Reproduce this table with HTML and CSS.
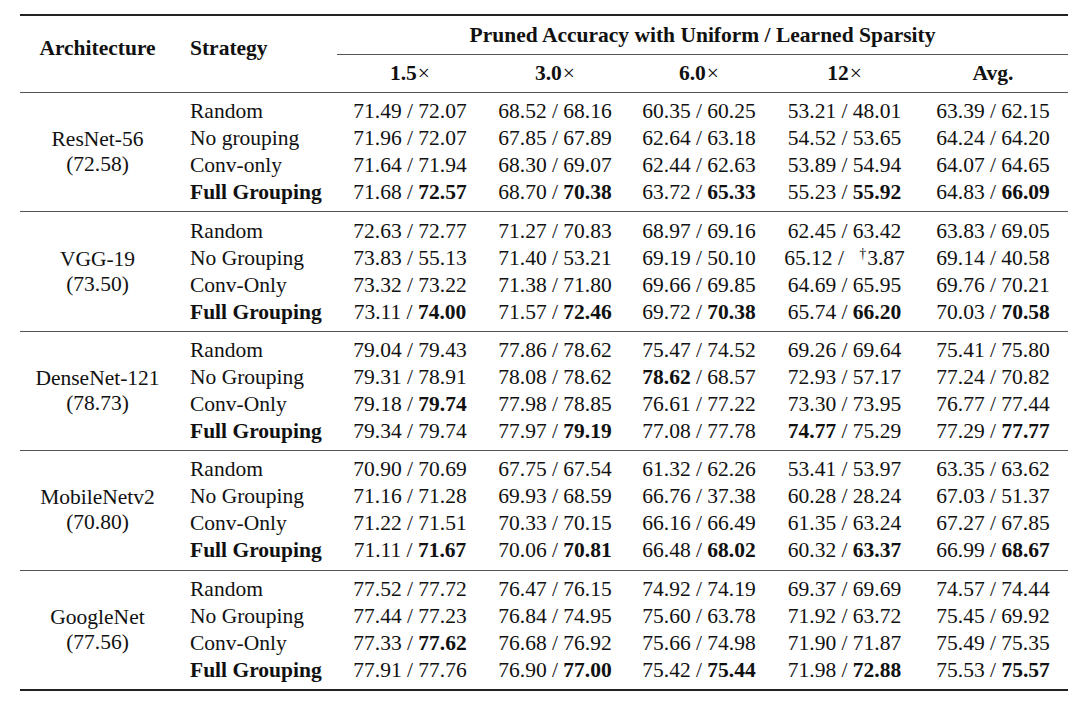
FILE: index.html
```html
<!DOCTYPE html>
<html lang="en">
<head>
<meta charset="utf-8">
<title>Pruned Accuracy with Uniform / Learned Sparsity</title>
<link rel="stylesheet" href="styles.css">
</head>
<body>
<table class="results">
  <colgroup>
    <col class="c-arch">
    <col class="c-strat">
    <col class="c-n1">
    <col class="c-n2">
    <col class="c-n3">
    <col class="c-n4">
    <col class="c-n5">
  </colgroup>
  <thead>
    <tr>
      <th class="h-arch" rowspan="2">Architecture</th>
      <th class="h-strat" rowspan="2">Strategy</th>
      <th class="h-group" colspan="5">Pruned Accuracy with Uniform / Learned Sparsity</th>
    </tr>
    <tr>
      <th class="h-sub">1.5<span class="times">×</span></th>
      <th class="h-sub">3.0<span class="times">×</span></th>
      <th class="h-sub">6.0<span class="times">×</span></th>
      <th class="h-sub">12<span class="times">×</span></th>
      <th class="h-sub">Avg.</th>
    </tr>
  </thead>
  <tbody>
    <tr class="first">
      <td class="arch" rowspan="4">ResNet-56<br>(72.58)</td>
      <td class="strat">Random</td>
      <td class="num">71.49 / 72.07</td>
      <td class="num">68.52 / 68.16</td>
      <td class="num">60.35 / 60.25</td>
      <td class="num">53.21 / 48.01</td>
      <td class="num">63.39 / 62.15</td>
    </tr>
    <tr>
      <td class="strat">No grouping</td>
      <td class="num">71.96 / 72.07</td>
      <td class="num">67.85 / 67.89</td>
      <td class="num">62.64 / 63.18</td>
      <td class="num">54.52 / 53.65</td>
      <td class="num">64.24 / 64.20</td>
    </tr>
    <tr>
      <td class="strat">Conv-only</td>
      <td class="num">71.64 / 71.94</td>
      <td class="num">68.30 / 69.07</td>
      <td class="num">62.44 / 62.63</td>
      <td class="num">53.89 / 54.94</td>
      <td class="num">64.07 / 64.65</td>
    </tr>
    <tr class="last">
      <td class="strat"><b>Full Grouping</b></td>
      <td class="num">71.68 / <b>72.57</b></td>
      <td class="num">68.70 / <b>70.38</b></td>
      <td class="num">63.72 / <b>65.33</b></td>
      <td class="num">55.23 / <b>55.92</b></td>
      <td class="num">64.83 / <b>66.09</b></td>
    </tr>
  </tbody>
  <tbody>
    <tr class="first">
      <td class="arch" rowspan="4">VGG-19<br>(73.50)</td>
      <td class="strat">Random</td>
      <td class="num">72.63 / 72.77</td>
      <td class="num">71.27 / 70.83</td>
      <td class="num">68.97 / 69.16</td>
      <td class="num">62.45 / 63.42</td>
      <td class="num">63.83 / 69.05</td>
    </tr>
    <tr>
      <td class="strat">No Grouping</td>
      <td class="num">73.83 / 55.13</td>
      <td class="num">71.40 / 53.21</td>
      <td class="num">69.19 / 50.10</td>
      <td class="num">65.12 / <span class="dagger">†</span>3.87</td>
      <td class="num">69.14 / 40.58</td>
    </tr>
    <tr>
      <td class="strat">Conv-Only</td>
      <td class="num">73.32 / 73.22</td>
      <td class="num">71.38 / 71.80</td>
      <td class="num">69.66 / 69.85</td>
      <td class="num">64.69 / 65.95</td>
      <td class="num">69.76 / 70.21</td>
    </tr>
    <tr class="last">
      <td class="strat"><b>Full Grouping</b></td>
      <td class="num">73.11 / <b>74.00</b></td>
      <td class="num">71.57 / <b>72.46</b></td>
      <td class="num">69.72 / <b>70.38</b></td>
      <td class="num">65.74 / <b>66.20</b></td>
      <td class="num">70.03 / <b>70.58</b></td>
    </tr>
  </tbody>
  <tbody>
    <tr class="first">
      <td class="arch" rowspan="4">DenseNet-121<br>(78.73)</td>
      <td class="strat">Random</td>
      <td class="num">79.04 / 79.43</td>
      <td class="num">77.86 / 78.62</td>
      <td class="num">75.47 / 74.52</td>
      <td class="num">69.26 / 69.64</td>
      <td class="num">75.41 / 75.80</td>
    </tr>
    <tr>
      <td class="strat">No Grouping</td>
      <td class="num">79.31 / 78.91</td>
      <td class="num">78.08 / 78.62</td>
      <td class="num"><b>78.62</b> / 68.57</td>
      <td class="num">72.93 / 57.17</td>
      <td class="num">77.24 / 70.82</td>
    </tr>
    <tr>
      <td class="strat">Conv-Only</td>
      <td class="num">79.18 / <b>79.74</b></td>
      <td class="num">77.98 / 78.85</td>
      <td class="num">76.61 / 77.22</td>
      <td class="num">73.30 / 73.95</td>
      <td class="num">76.77 / 77.44</td>
    </tr>
    <tr class="last">
      <td class="strat"><b>Full Grouping</b></td>
      <td class="num">79.34 / 79.74</td>
      <td class="num">77.97 / <b>79.19</b></td>
      <td class="num">77.08 / 77.78</td>
      <td class="num"><b>74.77</b> / 75.29</td>
      <td class="num">77.29 / <b>77.77</b></td>
    </tr>
  </tbody>
  <tbody>
    <tr class="first">
      <td class="arch" rowspan="4">MobileNetv2<br>(70.80)</td>
      <td class="strat">Random</td>
      <td class="num">70.90 / 70.69</td>
      <td class="num">67.75 / 67.54</td>
      <td class="num">61.32 / 62.26</td>
      <td class="num">53.41 / 53.97</td>
      <td class="num">63.35 / 63.62</td>
    </tr>
    <tr>
      <td class="strat">No Grouping</td>
      <td class="num">71.16 / 71.28</td>
      <td class="num">69.93 / 68.59</td>
      <td class="num">66.76 / 37.38</td>
      <td class="num">60.28 / 28.24</td>
      <td class="num">67.03 / 51.37</td>
    </tr>
    <tr>
      <td class="strat">Conv-Only</td>
      <td class="num">71.22 / 71.51</td>
      <td class="num">70.33 / 70.15</td>
      <td class="num">66.16 / 66.49</td>
      <td class="num">61.35 / 63.24</td>
      <td class="num">67.27 / 67.85</td>
    </tr>
    <tr class="last">
      <td class="strat"><b>Full Grouping</b></td>
      <td class="num">71.11 / <b>71.67</b></td>
      <td class="num">70.06 / <b>70.81</b></td>
      <td class="num">66.48 / <b>68.02</b></td>
      <td class="num">60.32 / <b>63.37</b></td>
      <td class="num">66.99 / <b>68.67</b></td>
    </tr>
  </tbody>
  <tbody>
    <tr class="first">
      <td class="arch" rowspan="4">GoogleNet<br>(77.56)</td>
      <td class="strat">Random</td>
      <td class="num">77.52 / 77.72</td>
      <td class="num">76.47 / 76.15</td>
      <td class="num">74.92 / 74.19</td>
      <td class="num">69.37 / 69.69</td>
      <td class="num">74.57 / 74.44</td>
    </tr>
    <tr>
      <td class="strat">No Grouping</td>
      <td class="num">77.44 / 77.23</td>
      <td class="num">76.84 / 74.95</td>
      <td class="num">75.60 / 63.78</td>
      <td class="num">71.92 / 63.72</td>
      <td class="num">75.45 / 69.92</td>
    </tr>
    <tr>
      <td class="strat">Conv-Only</td>
      <td class="num">77.33 / <b>77.62</b></td>
      <td class="num">76.68 / 76.92</td>
      <td class="num">75.66 / 74.98</td>
      <td class="num">71.90 / 71.87</td>
      <td class="num">75.49 / 75.35</td>
    </tr>
    <tr class="last">
      <td class="strat"><b>Full Grouping</b></td>
      <td class="num">77.91 / 77.76</td>
      <td class="num">76.90 / <b>77.00</b></td>
      <td class="num">75.42 / <b>75.44</b></td>
      <td class="num">71.98 / <b>72.88</b></td>
      <td class="num">75.53 / <b>75.57</b></td>
    </tr>
  </tbody>
</table>
</body>
</html>
```

FILE: styles.css
```css
html, body {
  margin: 0;
  background: #ffffff;
}

body {
  padding: 14px 0 0 20px;
  font-family: "Liberation Serif", "Times New Roman", serif;
  font-size: 21.5px;
  color: #111111;
}

.results {
  border-collapse: separate;
  border-spacing: 0;
  table-layout: fixed;
  width: 1048px;
  border-top: 2px solid #222222;
  border-bottom: 2px solid #222222;
}

.c-arch { width: 155px; }
.c-strat { width: 162px; }
.c-n1 { width: 146px; }
.c-n2 { width: 144px; }
.c-n3 { width: 144px; }
.c-n4 { width: 147px; }
.c-n5 { width: 150px; }

.results th,
.results td {
  padding: 0;
  line-height: 27px;
  white-space: nowrap;
}

.results th {
  font-weight: bold;
}

.results .h-arch {
  text-align: center;
  vertical-align: top;
  padding-top: 18.5px;
}

.results .h-strat {
  text-align: left;
  vertical-align: top;
  padding-top: 18.5px;
  padding-left: 15px;
}

.results .h-group {
  text-align: center;
  padding: 5.5px 0;
  border-bottom: 1px solid #555555;
}

.results .h-sub {
  text-align: center;
  padding: 5px 0;
}

.times {
  font-weight: normal;
  margin-left: 1px;
}

.results tr.first td {
  border-top: 1px solid #555555;
  padding-top: 5.2px;
}

.results tr.last td {
  padding-bottom: 5.2px;
}

.results td.arch {
  text-align: center;
  vertical-align: middle;
  line-height: 25px;
  padding-top: 5.2px;
  padding-bottom: 5.2px;
}

.results td.strat {
  text-align: left;
  padding-left: 15px;
}

.results td.num {
  text-align: center;
}

.dagger {
  display: inline-block;
  width: 17px;
  text-align: right;
  font-size: 14px;
  line-height: 1;
  vertical-align: 7px;
  margin-right: 1px;
}
```
